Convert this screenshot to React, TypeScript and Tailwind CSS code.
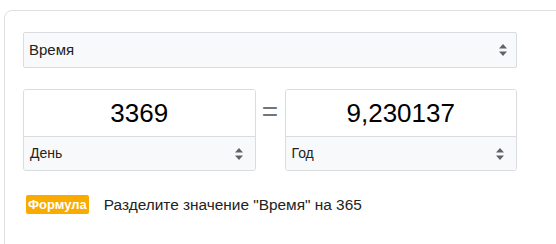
import React from 'react';

const Arrows = () => (
  <svg width="8" height="12" viewBox="0 0 8 12" className="shrink-0">
    <path d="M4 0 L8 4.5 L0 4.5 Z" fill="#5f6368" />
    <path d="M4 12 L8 7.5 L0 7.5 Z" fill="#5f6368" />
  </svg>
);

const UnitBox = ({ value, unit }: { value: string; unit: string }) => (
  <div className="flex-1 flex flex-col border border-[#dadce0] rounded-[3px] overflow-hidden">
    <div className="h-[46px] flex items-center justify-center bg-white text-[26px] text-black">
      {value}
    </div>
    <div className="h-[34px] border-t border-[#dadce0] bg-[#f8f9fa] flex items-center justify-between pl-[6px] pr-[12px]">
      <span className="text-[14px] text-[#222]">{unit}</span>
      <Arrows />
    </div>
  </div>
);

export default function App() {
  return (
    <div className="w-[556px] h-[244px] overflow-hidden bg-white font-['Liberation_Sans',Arial,sans-serif]">
      <div className="ml-[4px] mt-[10px] w-[600px] h-[260px] border border-[#e0e0e0] rounded-[8px] pl-[18px] pt-[21px]">
        <div className="w-[494px] h-[36px] bg-[#f8f9fa] border border-[#dadce0] rounded-[2px] flex items-center justify-between pl-[5px] pr-[9px]">
          <span className="text-[15px] text-[#222]">Время</span>
          <Arrows />
        </div>

        <div className="w-[494px] mt-[21px] flex items-start">
          <UnitBox value="3369" unit="День" />
          <div className="w-[29px] h-[46px] flex items-center justify-center">
            <span className="text-[28px] leading-none text-[#70757a]">=</span>
          </div>
          <UnitBox value="9,230137" unit="Год" />
        </div>

        <div className="mt-[22px] flex items-center pl-[3px]">
          <span className="bg-[#f9ab00] text-white font-bold text-[13px] leading-[19px] px-[2px] rounded-[2px]">
            Формула
          </span>
          <span className="ml-[15px] text-[15.4px] text-[#222]">
            Разделите значение "Время" на 365
          </span>
        </div>
      </div>
    </div>
  );
}
